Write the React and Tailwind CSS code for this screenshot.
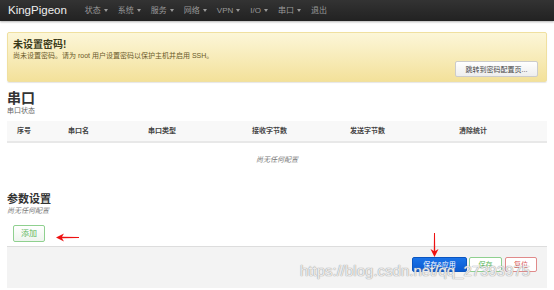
const menu = ['状态', '系统', '服务', '网络', 'VPN', 'I/O', '串口'];

const columns = [
  { label: '序号', w: 'w-[51px]' },
  { label: '串口名', w: 'w-[80px]' },
  { label: '串口类型', w: 'w-[104px]' },
  { label: '接收字节数', w: 'w-[98px]' },
  { label: '发送字节数', w: 'w-[109px]' },
  { label: '清除统计', w: 'flex-1' },
];

export default function App() {
  return (
    <div className="relative h-[290px] w-[554px] overflow-hidden bg-white font-['Liberation_Sans','Noto_Sans_CJK_SC',sans-serif] text-[#404040]">
      <nav className="flex h-[21px] items-center bg-gradient-to-b from-[#333] to-[#222] shadow-[0_1px_2px_rgba(0,0,0,0.3)]">
        <span className="ml-[8px] mr-[18px] text-[11.5px] leading-none text-[#eee]">KingPigeon</span>
        {menu.map((item) => (
          <span key={item} className="mr-[10px] flex items-center gap-[3px] text-[8px] leading-none text-[#999]">
            {item}
            <span className="border-x-[2.5px] border-t-[3px] border-x-transparent border-t-[#999]" />
          </span>
        ))}
        <span className="text-[8px] leading-none text-[#999]">退出</span>
      </nav>

      <div className="mx-[7px] mt-[11px] h-[50px] rounded-[2px] border border-[#f0e0a0] bg-gradient-to-b from-[#fcf6d8] to-[#f3e19a] px-[5px] pt-[6px] shadow-[0_1px_1px_rgba(0,0,0,0.1)]">
        <div className="text-[10px] font-bold leading-[12px] text-[#3a3a1a]">未设置密码!</div>
        <div className="text-[7px] leading-[10px] text-[#6a5a2a]">尚未设置密码。请为 root 用户设置密码以保护主机并启用 SSH。</div>
        <div className="flex justify-end pr-[3px]">
          <button className="h-[16px] w-[83px] rounded-[2px] border border-[#ccc] bg-gradient-to-b from-white to-[#eee] text-[7px] leading-none text-[#444]">
            跳转到密码配置页...
          </button>
        </div>
      </div>

      <div className="mx-[7px] mt-[8px]">
        <h2 className="text-[14px] font-bold leading-[16px] text-[#333]">串口</h2>
        <div className="text-[7px] leading-[10px] text-[#666]">串口状态</div>
        <div className="mt-[5px] flex h-[22px] items-center border-b-2 border-[#e8e8e8] bg-[#f8f8f8] pl-[10px] text-[7px] font-bold text-[#444]">
          {columns.map((c) => (
            <span key={c.label} className={c.w}>{c.label}</span>
          ))}
        </div>
        <div className="flex h-[34px] items-center justify-center text-[7px] italic text-[#777]">尚无任何配置</div>

        <h3 className="mt-[15px] text-[11px] font-bold leading-[14px] text-[#333]">参数设置</h3>
        <div className="text-[7px] italic leading-[10px] text-[#777]">尚无任何配置</div>
        <button className="ml-[6px] mt-[9px] h-[17px] w-[32px] rounded-[2px] border border-[#8fd08f] bg-gradient-to-b from-white to-[#eef4ee] text-[8px] leading-none text-[#5cb85c]">
          添加
        </button>
        <div className="mt-[3px] flex h-[42px] items-start justify-end gap-[2px] border-t border-[#ddd] bg-[#f3f3f3] pr-[10px] pt-[10px]">
          <button className="h-[15px] w-[55px] rounded-[2px] border border-[#0a55c0] bg-gradient-to-b from-[#1a73e8] to-[#0b5ad0] text-[7px] leading-none text-white">
            保存&amp;应用
          </button>
          <button className="h-[15px] w-[33px] rounded-[2px] border border-[#8fd08f] bg-white text-[7px] leading-none text-[#5cb85c]">
            保存
          </button>
          <button className="ml-[1px] h-[15px] w-[32px] rounded-[2px] border border-[#e08a8a] bg-white text-[7px] leading-none text-[#d9534f]">
            复位
          </button>
        </div>
      </div>

      <svg className="absolute left-[56px] top-[233px]" width="24" height="9" viewBox="0 0 24 9">
        <path d="M0 4.5 L8 0.5 L6 3.8 L23 4 L23 5 L6 5.2 L8 8.5 Z" fill="#ee1111" />
      </svg>
      <svg className="absolute left-[430px] top-[233px]" width="9" height="24" viewBox="0 0 9 24">
        <path d="M4.5 24 L0.5 16 L3.8 18 L4 0 L5 0 L5.2 18 L8.5 16 Z" fill="#ee1111" />
      </svg>

      <div className="pointer-events-none absolute left-[300px] top-[263px] whitespace-nowrap text-[15px] leading-none text-white/80 [text-shadow:0_0_1px_#999,0_0_1px_#999]">
        https://blog.csdn.net/qq_27393975
      </div>
    </div>
  );
}
